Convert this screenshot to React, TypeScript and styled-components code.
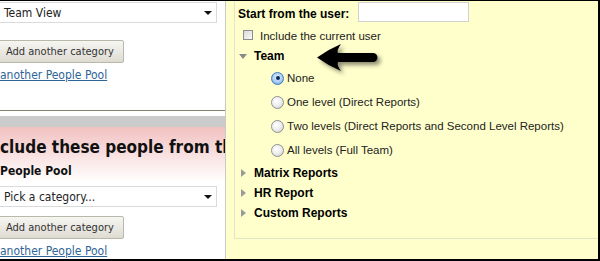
import React from 'react';
import styled, { createGlobalStyle } from 'styled-components';

const GlobalStyle = createGlobalStyle`
  html, body {
    margin: 0;
    padding: 0;
    background: #fff;
  }
  * {
    box-sizing: border-box;
  }
`;

const Frame = styled.div`
  width: 600px;
  height: 261px;
  display: grid;
  grid-template-columns: 226px 1fr;
  border-top: 1px solid #000;
  border-right: 2px solid #000;
  border-bottom: 2px solid #000;
  overflow: hidden;
`;

/* ---------- left side: people pool editor ---------- */

const LeftPanel = styled.div`
  background: #fff;
  border-right: 1px solid #c9c9c9;
  overflow: hidden;
  font-family: "DejaVu Sans Condensed", "Liberation Sans", sans-serif;
  font-size: 12px;
  color: #222;
  display: flex;
  flex-direction: column;
`;

const PoolBlock = styled.div<{ $pink?: boolean }>`
  display: flex;
  flex-direction: column;
  align-items: flex-start;
  padding-top: ${(p) => (p.$pink ? '10px' : '0')};
  background: ${(p) => (p.$pink ? 'linear-gradient(#f2c1c1 0px, #f9e3e3 30px, #fff 55px)' : '#fff')};
  flex: ${(p) => (p.$pink ? '1' : 'none')};
`;

const SelectBox = styled.div<{ $mt: number }>`
  margin-top: ${(p) => p.$mt}px;
  margin-left: -2px;
  width: 219px;
  height: 21px;
  border: 1px solid #dadada;
  background: #fff;
  display: flex;
  align-items: center;
  justify-content: space-between;
  padding: 0 4px 0 5px;
  color: #222;
`;

const Caret = styled.span`
  width: 0;
  height: 0;
  border-left: 4px solid transparent;
  border-right: 4px solid transparent;
  border-top: 4px solid #111;
`;

const AddButton = styled.button<{ $mt: number }>`
  margin-top: ${(p) => p.$mt}px;
  margin-left: -4px;
  height: 23px;
  padding: 0 9px;
  border: 1px solid #b9b9aa;
  border-radius: 2px;
  background: linear-gradient(#f6f6f2, #dedbd2);
  font-family: inherit;
  font-size: 11px;
  color: #333;
  white-space: nowrap;
`;

const PoolLink = styled.a<{ $mt: number }>`
  margin-top: ${(p) => p.$mt}px;
  line-height: 14px;
  color: #2f6496;
  text-decoration: underline;
  white-space: nowrap;
`;

const Divider = styled.div`
  margin-top: 28px;
  height: 1px;
  background: #7f8566;
`;

const GrayBar = styled.div`
  margin-top: 5px;
  height: 11px;
  background: #cbcbcb;
`;

const PoolHeading = styled.div`
  font-size: 17px;
  line-height: 20px;
  font-weight: bold;
  color: #111;
  white-space: nowrap;
`;

const PoolLabel = styled.div`
  margin-top: 7px;
  font-size: 12px;
  line-height: 14px;
  font-weight: bold;
  color: #111;
`;

/* ---------- right side: report filter ---------- */

const RightPanel = styled.div`
  position: relative;
  background: #ffffcc;
  padding-left: 8px;
  font-family: "Liberation Sans", Arial, sans-serif;
  font-size: 11.5px;
  color: #000;
`;

const FilterBox = styled.div`
  height: 238px;
  border-left: 1px solid #e2e5c6;
  border-bottom: 1px solid #e2e5c6;
  padding-left: 3px;
  display: flex;
  flex-direction: column;
`;

const StartRow = styled.div`
  margin-top: 1px;
  height: 20px;
  display: flex;
  align-items: flex-start;
`;

const BoldLabel = styled.span`
  font-size: 12px;
  font-weight: bold;
  line-height: 14px;
  margin-top: 5px;
  white-space: nowrap;
`;

const UserInput = styled.div`
  margin-left: 9px;
  width: 111px;
  height: 20px;
  background: #fff;
  border: 1px solid #d2d2d2;
`;

const CheckRow = styled.label`
  margin-top: 7px;
  padding-left: 5px;
  line-height: 14px;
  display: flex;
  align-items: flex-start;
  gap: 7px;
  color: #222;
`;

const CheckBox = styled.span`
  margin-top: 1px;
  width: 10px;
  height: 10px;
  border: 1px solid #8d8d8d;
  background: linear-gradient(135deg, #d9d9d9, #fafafa);
`;

const SectionRow = styled.div<{ $open?: boolean; $mt: number }>`
  margin-top: ${(p) => p.$mt}px;
  padding-left: ${(p) => (p.$open ? '1px' : '3px')};
  font-size: 12px;
  line-height: 14px;
  font-weight: bold;
  display: flex;
  align-items: center;
  gap: ${(p) => (p.$open ? '7px' : '8px')};
`;

const DownTriangle = styled.span`
  width: 0;
  height: 0;
  border-left: 4px solid transparent;
  border-right: 4px solid transparent;
  border-top: 5px solid #8a8a8a;
`;

const RightTriangle = styled.span`
  width: 0;
  height: 0;
  border-top: 4px solid transparent;
  border-bottom: 4px solid transparent;
  border-left: 5px solid #9a9a9a;
`;

const RadioList = styled.div`
  margin-top: 8px;
  padding-left: 33px;
  display: flex;
  flex-direction: column;
  gap: 10px;
`;

const RadioRow = styled.label`
  line-height: 14px;
  display: flex;
  align-items: center;
  gap: 3px;
  color: #222;
  white-space: nowrap;
`;

const RadioDot = styled.span<{ $checked?: boolean }>`
  position: relative;
  width: 13px;
  height: 13px;
  border-radius: 50%;
  border: 1px solid ${(p) => (p.$checked ? '#3d78c4' : '#8f9090')};
  background: ${(p) =>
    p.$checked
      ? 'radial-gradient(circle at 50% 40%, #e4f1fd 0%, #a9cdf3 55%, #5d98da 100%)'
      : 'radial-gradient(circle at 40% 35%, #ffffff 0%, #eeeeee 50%, #c9c9c9 100%)'};

  &::after {
    content: '';
    display: ${(p) => (p.$checked ? 'block' : 'none')};
    position: absolute;
    left: 3.5px;
    top: 3.5px;
    width: 4px;
    height: 4px;
    border-radius: 50%;
    background: #0d2a58;
  }
`;

const CollapsedList = styled.div`
  margin-top: 9px;
  display: flex;
  flex-direction: column;
  gap: 6px;
`;

const PointerArrow = styled.svg`
  position: absolute;
  left: 90px;
  top: 40px;
  overflow: visible;
  filter: drop-shadow(3px 3px 2px rgba(0, 0, 0, 0.45));
`;

const levels = [
  { label: 'None', checked: true },
  { label: 'One level (Direct Reports)' },
  { label: 'Two levels (Direct Reports and Second Level Reports)' },
  { label: 'All levels (Full Team)' },
];

const reports = ['Matrix Reports', 'HR Report', 'Custom Reports'];

const App: React.FC = () => {
  return (
    <>
      <GlobalStyle />
      <Frame>
        <LeftPanel>
          <PoolBlock>
            <SelectBox $mt={1}>
              <span>Team View</span>
              <Caret />
            </SelectBox>
            <AddButton $mt={17}>Add another category</AddButton>
            <PoolLink $mt={5}>another People Pool</PoolLink>
          </PoolBlock>
          <Divider />
          <GrayBar />
          <PoolBlock $pink>
            <PoolHeading>clude these people from the</PoolHeading>
            <PoolLabel>People Pool</PoolLabel>
            <SelectBox $mt={8}>
              <span>Pick a category...</span>
              <Caret />
            </SelectBox>
            <AddButton $mt={9}>Add another category</AddButton>
            <PoolLink $mt={5}>another People Pool</PoolLink>
          </PoolBlock>
        </LeftPanel>

        <RightPanel>
          <FilterBox>
            <StartRow>
              <BoldLabel>Start from the user:</BoldLabel>
              <UserInput />
            </StartRow>
            <CheckRow>
              <CheckBox />
              Include the current user
            </CheckRow>
            <SectionRow $open $mt={6}>
              <DownTriangle />
              Team
            </SectionRow>
            <RadioList>
              {levels.map((lvl) => (
                <RadioRow key={lvl.label}>
                  <RadioDot $checked={lvl.checked} />
                  {lvl.label}
                </RadioRow>
              ))}
            </RadioList>
            <CollapsedList>
              {reports.map((r) => (
                <SectionRow key={r} $mt={0}>
                  <RightTriangle />
                  {r}
                </SectionRow>
              ))}
            </CollapsedList>
          </FilterBox>
          <PointerArrow width="70" height="34" viewBox="0 0 70 34">
            <path
              d="M1 16.5 Q12 8.5 25 3 Q20.5 9.5 22 12 L57 12 A4.5 4.5 0 0 1 57 21 L22 21 Q20.5 24 25 30 Q12 24.5 1 16.5 Z"
              fill="#000"
            />
          </PointerArrow>
        </RightPanel>
      </Frame>
    </>
  );
};

export default App;
